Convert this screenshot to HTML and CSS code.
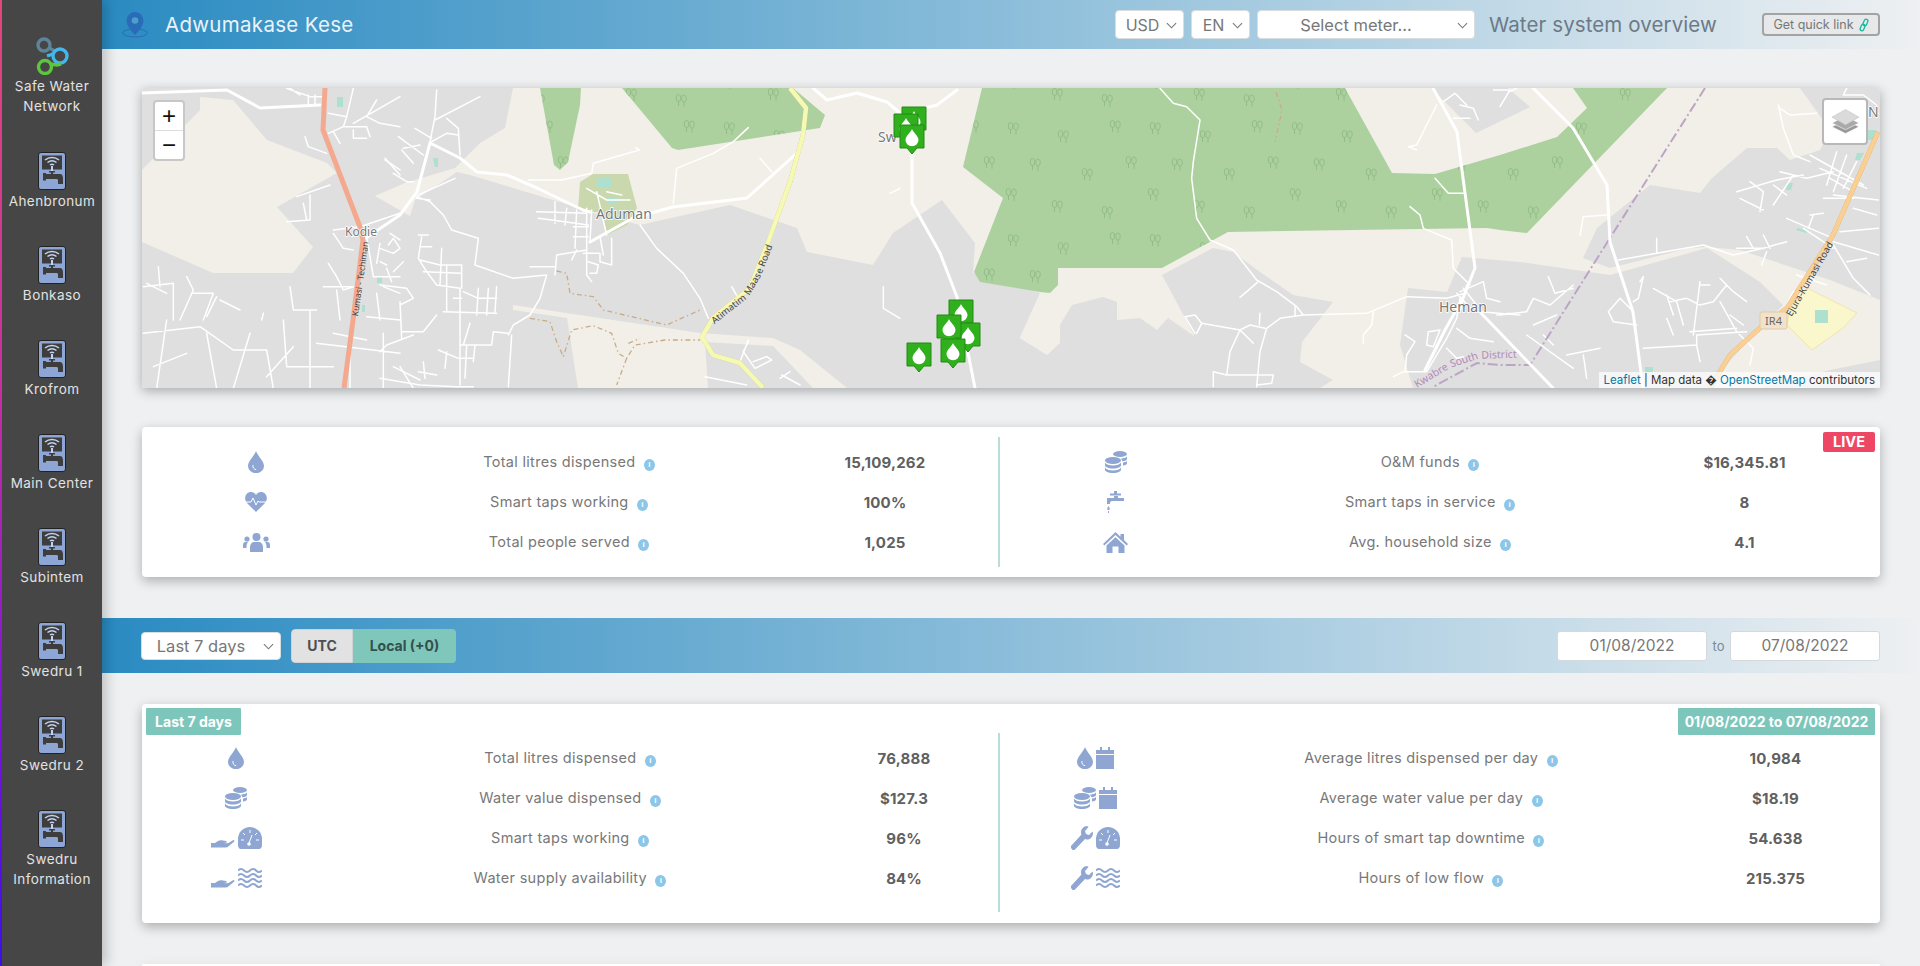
FILE: index.html
```html
<!DOCTYPE html>
<html lang="en">
<head>
<meta charset="utf-8">
<title>Adwumakase Kese - Water system overview</title>
<link rel="stylesheet" href="styles.css">
</head>
<body>
<svg class="defs" width="0" height="0" aria-hidden="true">
  <defs>
    <symbol id="i-drop" viewBox="0 0 16 22"><path d="M8 0C7 4 0 10 0 15a8 7.2 0 0 0 16 0C16 10 9 4 8 0z"/><path class="cut" d="M5 14c-.5 2.500 .8 4.300 3.200 4.700" /></symbol>
    <symbol id="i-heart" viewBox="0 0 22 20"><path d="M11 20L2 11C-2 6 1 0 6 0c2.200 0 4 1 5 3 1-2 2.800-3 5-3 5 0 8 6 4 11z"/><path class="cut" d="M0 10h6l2-4 3 7 2-4 1 1h8"/></symbol>
    <symbol id="i-users" viewBox="0 0 27 19"><circle cx="13.500" cy="4" r="4"/><circle cx="4" cy="6" r="2.600"/><circle cx="23" cy="6" r="2.600"/><path d="M7 19v-5c0-3 2-5 4-5h5c2 0 4 2 4 5v5z"/><path d="M0 15v-3c0-2 1-3 2.500-3H5c-1 1-1.500 3-1.500 5v1zM27 15v-3c0-2-1-3-2.500-3H22c1 1 1.500 3 1.500 5v1z"/></symbol>
    <symbol id="i-coins" viewBox="0 0 22 22"><ellipse cx="15" cy="3" rx="7" ry="3"/><path d="M16 7.500c3 0 6-1 6-2.500v3c0 1-2 2-4.500 2.300zM18 11.500c2 0 4-1 4-2v3c0 1-2 1.800-4 2z"/><ellipse cx="8" cy="9.500" rx="8" ry="3.400"/><path d="M0 11.500c1 2 4 3 8 3s7-1 8-3v3c0 1.500-3.500 3-8 3s-8-1.500-8-3zM0 16.500c1 2 4 3 8 3s7-1 8-3v2.500c0 1.500-3.500 3-8 3s-8-1.500-8-3z"/></symbol>
    <symbol id="i-tap" viewBox="0 0 17 22"><path d="M7 0h3v2.500h-3zM3 2.500h11v2H3zM0 7h7V5h4v2h6v3H5c-1 0-2 1-2 2v1H0v-2c0-2 0-4 0-4z"/><path d="M1.500 15c.6 1.200 1.200 2 1.200 3s-.6 1-1.200 1-1.200 0-1.200-1 .6-1.800 1.200-3zM1 20h1v2H1z"/></symbol>
    <symbol id="i-home" viewBox="0 0 25 21"><path d="M12.500 0l5 4.700V2h3.500v6l4 4-1.300 1.400L12.500 3 1.300 13.400 0 12z"/><path d="M3.500 13.500l9-8.200 9 8.200V21h-6v-6.500h-6V21h-6z"/></symbol>
    <symbol id="i-hand" viewBox="0 0 24 11"><path d="M0 5h4l3-2c2-1 3-1 5-.5l3 .5c1 .3 1 1.500 0 1.800l-3 .2 5 .2 5-3c1-.5 2 .5 1 1.500l-6 5c-1 .6-1.500.8-3 .8H0z"/></symbol>
    <symbol id="i-gauge" viewBox="0 0 24 22"><path d="M12 0a12 12 0 0 1 12 12v6c0 2-1 4-3 4H3c-2 0-3-2-3-4v-6A12 12 0 0 1 12 0z"/><path class="cut" d="M12 3v3M5 6l2 2M19 6l-2 2M3 13h3M21 13h-3M11 16l3-8"/><circle class="cutf" cx="11" cy="17" r="1.800"/></symbol>
    <symbol id="i-waves" viewBox="0 0 24 20"><path class="wave" d="M0 2.500q3-3 6 0t6 0 6 0 6 0M0 7.500q3-3 6 0t6 0 6 0 6 0M0 12.500q3-3 6 0t6 0 6 0 6 0M0 17.500q3-3 6 0t6 0 6 0 6 0"/></symbol>
    <symbol id="i-wrench" viewBox="0 0 22 24"><path d="M16 0c-3 0-6 3-6 6 0 1 0 2 .5 2.500L0 20c-.6 1 .2 2.400 1.200 3.400.8.800 2 .8 2.800 0L14 13c1 .5 2 .5 3 .5 3-.5 5-3.500 5-6.500l-.5-1.500L18 9l-3-1-1-3 3.500-4z"/></symbol>
    <symbol id="i-cal" viewBox="0 0 18 22"><path d="M4 0h2v3h6V0h2v3h4v4H0V3h4zM0 8h18v14H0z"/></symbol>
    <symbol id="i-unit" viewBox="0 0 28 38">
      <rect class="u-body" x=".5" y=".5" width="27" height="37" rx="2.500"/>
      <rect class="u-screen" x="4" y="3.500" width="20" height="14"/>
      <path class="u-wifi" d="M7 8c4-3.500 10-3.500 14 0M9.500 10.500c2.800-2.300 6.200-2.300 9 0M12 13c1.200-1 2.800-1 4 0"/>
      <rect class="u-dot" x="13" y="14" width="2" height="5"/>
      <path class="u-tap" d="M11 19h6v1.500h-2V22H22c2 0 3 1.500 3 5v5h-5v-3.500c0-.8-.5-1.500-1.500-1.500H8v1.500H5V21h3v1h5v-1.500h-2z"/>
    </symbol>
    <symbol id="i-pin" viewBox="0 0 26 26"><ellipse class="p-ring" cx="13" cy="21" rx="12.300" ry="4"/><path class="p-fill" d="M13 0a8.500 8.500 0 0 0-8.500 8.500C4.500 14 10 20 13 23c3-3 8.500-9 8.500-14.500A8.500 8.500 0 0 0 13 0z"/><circle class="p-hole" cx="13" cy="8.500" r="3.300"/></symbol>
    <g id="tree"><ellipse cx="2.500" cy="4" rx="2.300" ry="3.600"/><ellipse cx="8" cy="4.500" rx="2.300" ry="3.600"/><path d="M2.500 7v5M8 8v5"/></g>
    <pattern id="woods" width="142" height="112" patternUnits="userSpaceOnUse" patternTransform="translate(8 4)">
      <g class="tree-g">
        <use href="#tree" x="6" y="6"/><use href="#tree" x="56" y="14"/><use href="#tree" x="108" y="4"/>
        <use href="#tree" x="28" y="42"/><use href="#tree" x="80" y="52"/><use href="#tree" x="124" y="40"/>
        <use href="#tree" x="4" y="72"/><use href="#tree" x="50" y="84"/><use href="#tree" x="100" y="90"/>
      </g>
    </pattern>
    <g id="forests">
      <polygon points="540,88 581,88 580,105 568,162 560,170 554,165"/>
      <polygon points="622,88 793,88 825,115 820,128 678,150 672,148"/>
      <polygon points="982,88 1345,88 1392,173 1435,174 1500,155 1557,137 1587,108 1573,88 1667,88 1527,233 1500,230 1487,228 1228,232 1162,268 1058,268 1058,285 1050,293 1040,292 980,282 974,272 1003,198 963,167"/>
    </g>
    <g id="marker"><path class="m-body" d="M-12 -30H12V-7H5L0 -1L-5 -7H-12z"/><path class="m-drop" d="M0 -26C-1 -23 -6.500 -19 -6.500 -15A6.500 6.200 0 0 0 6.500 -15C6.500 -19 1 -23 0 -26z"/></g>
    <path id="p-yellow" d="M712 321L745 295L757 275L790 190"/>
    <path id="p-red" d="M354 316L366 232"/>
    <path id="p-orange" d="M1788 315L1838 228L1860 190"/>
    <path id="p-dist" d="M1417 388L1450 368L1478 359L1560 356"/>
  </defs>
</svg>

<div class="app">
  <nav class="side">
    <a class="side-item brand">
      <svg class="logo" viewBox="0 0 35 38"><circle class="l1" cx="9" cy="8" r="6"/><path class="l1" d="M14 11l6 3"/><circle class="l2" cx="25" cy="19" r="7"/><path class="l2" d="M18 17l-6 2"/><circle class="l3" cx="10" cy="30" r="6.500"/><path class="l3" d="M15 27l7 1 4-1"/></svg>
      <span>Safe Water<br>Network</span>
    </a>
    <a class="side-item"><svg class="unit"><use href="#i-unit"/></svg><span>Ahenbronum</span></a>
    <a class="side-item"><svg class="unit"><use href="#i-unit"/></svg><span>Bonkaso</span></a>
    <a class="side-item"><svg class="unit"><use href="#i-unit"/></svg><span>Krofrom</span></a>
    <a class="side-item"><svg class="unit"><use href="#i-unit"/></svg><span>Main Center</span></a>
    <a class="side-item"><svg class="unit"><use href="#i-unit"/></svg><span>Subintem</span></a>
    <a class="side-item"><svg class="unit"><use href="#i-unit"/></svg><span>Swedru 1</span></a>
    <a class="side-item"><svg class="unit"><use href="#i-unit"/></svg><span>Swedru 2</span></a>
    <a class="side-item"><svg class="unit"><use href="#i-unit"/></svg><span>Swedru<br>Information</span></a>
  </nav>

  <main class="main">
    <header class="topbar">
      <svg class="pin"><use href="#i-pin"/></svg>
      <h1 class="site">Adwumakase Kese</h1>
      <div class="top-right">
        <div class="sel w-usd"><span>USD</span><svg class="chev" viewBox="0 0 12 7"><path d="M1 1l5 5 5-5"/></svg></div>
        <div class="sel w-en"><span>EN</span><svg class="chev" viewBox="0 0 12 7"><path d="M1 1l5 5 5-5"/></svg></div>
        <div class="sel w-meter"><span>Select meter...</span><svg class="chev" viewBox="0 0 12 7"><path d="M1 1l5 5 5-5"/></svg></div>
        <div class="page-title">Water system overview</div>
        <button class="quick">Get quick link <svg class="link" viewBox="0 0 12 16"><rect x="5.500" y="1" width="4.500" height="8" rx="2.200" transform="rotate(22 7.700 5)"/><rect x="2" y="7" width="4.500" height="8" rx="2.200" transform="rotate(22 4.200 11)"/></svg></button>
      </div>
    </header>

    <section class="map">
      <svg class="map-svg" viewBox="142 88 1738 300" preserveAspectRatio="none">
        <rect class="m-land" x="142" y="88" width="1738" height="300"/>
        <g class="m-grey">
          <polygon points="142,88 513,88 505,128 480,143 455,168 405,183 375,196 410,216 415,200 457,172 470,175 563,203 590,212 640,225 653,222 730,205 797,228 807,252 873,265 893,233 942,200 975,243 973,273 1040,293 997,388 142,388"/>
          <polygon points="1162,275 1213,248 1233,252 1260,272 1293,295 1333,302 1302,342 1300,362 1333,380 1320,388 1218,388 1193,333"/>
          <polygon points="1000,332 1007,348 1018,337 1047,355 1060,343 1060,325 1072,305 1103,297 1117,302 1117,320 1140,318 1157,330 1168,318 1197,338 1215,368 1218,388 997,388"/>
          <polygon points="1400,345 1408,288 1447,292 1462,257 1520,262 1610,275 1707,248 1760,282 1783,305 1760,328 1717,375 1713,388 1413,388"/>
          <polygon points="1583,258 1597,228 1650,185 1700,193 1712,178 1747,148 1777,148 1790,160 1820,150 1830,130 1800,88 1880,88 1880,300 1830,280 1740,250 1707,247 1690,248 1610,268"/>
          <polygon points="1431,88 1476,133 1530,107 1508,88"/>
          <polygon points="1760,388 1830,370 1880,360 1880,388"/>
        </g>
        <g class="m-beige">
          <polygon points="142,170 200,110 200,97 233,100 267,140 327,163 337,173 277,207 313,247 293,273 213,273 142,242"/>
          <polygon points="513,305 700,333 773,338 800,350 847,388 813,388 773,346 705,342 708,388 578,388 567,318 513,310"/>
        </g>
        <use class="m-green" href="#forests"/>
        <use href="#forests" fill="url(#woods)"/>
        <g class="m-campus"><polygon points="580,182 593,174 628,174 637,208 627,225 607,235 603,213 578,210"/></g>
        <polygon class="m-hosp" points="1807,288 1857,313 1843,328 1812,350 1787,325 1790,308"/>
        <g class="m-teal">
          <polygon points="597,178 612,178 612,188 597,188"/><polygon points="608,197 618,197 618,203 608,203"/>
          <polygon points="1815,310 1828,310 1828,323 1815,323"/><polygon points="1868,130 1876,130 1876,140 1868,140"/>
          <polygon points="1857,153 1864,153 1860,160 1855,160"/><polygon points="1787,183 1793,183 1791,190 1786,190"/>
          <polygon points="1798,228 1808,231 1806,233 1796,230"/><polygon points="1645,367 1653,367 1653,372 1645,372"/>
          <polygon points="337,97 343,97 343,107 337,107"/><polygon points="377,277 382,277 382,283 377,283"/>
          <polygon points="433,158 438,158 438,167 435,167"/><polygon points="362,305 365,305 365,312 362,312"/>
        </g>

        <g class="st" transform="translate(0 0) scale(.33333)">
          <path d="M860 265L930 290L965 290M925 285L925 315M945 285L945 315M870 265L900 285M985 340L1040 350L1060 265M1040 350L1030 380L985 400M1060 370L1200 290M1030 380L1100 380L1110 410M1060 390L1060 415L1100 415M1000 395L1020 430M1130 300L1100 350L1140 370L1200 380M915 410L925 440L980 460M1155 480L1200 510M890 590L990 555M930 585L930 660L860 665M910 610L920 660M1000 690L1080 680L1200 640M1000 700L1030 745L1060 750M1100 710L1120 830L1200 830M1140 730L1130 790M1170 700L1200 720M985 790L1010 830L1030 870L1060 860M970 860L1060 860M1010 870L1020 960M430 860L520 850L520 960M475 800L480 860M440 850L500 880M560 830L580 870L540 960M580 880L640 880L610 960M660 900L720 930M650 890L620 950M870 860L880 930L950 930M790 940L785 960M1150 860L1200 880M1130 880L1140 960M430 1000L600 980L700 1050L800 1050L820 1165M500 960L470 1165M620 1000L650 1165M750 1000L700 1165M850 960L860 1100L1000 1100M930 930L930 1165M1000 1000L1100 1020M1050 1050L1050 1165M950 1030L1200 1060M1100 950L1200 960M1150 1000L1150 1165M1200 1100L1240 1165M560 1060L460 1100M880 1040L800 1130"/>
        </g>
        <g class="st" transform="translate(380 85) scale(.33333)">
          <path d="M150 170L165 95L170 15M165 105L300 35M200 100L235 130L240 210M155 170L200 145L235 150M105 130L155 160M55 155L130 210M65 195L100 235M15 220L60 270M40 265L80 290L100 290M120 180L70 190M110 340L150 345M110 335L150 350L190 390L215 435L295 460L285 540L400 580L500 570L480 640L450 690L400 720L385 750M115 330L225 280M125 455L115 520L140 560L170 600L240 610L240 900M115 450L145 450M120 485L155 485M120 525L180 540L245 540L245 610M185 490L180 600M200 540L200 680M130 560L245 565M250 620L295 640L350 640M295 610L290 690M325 610L320 690M350 605L345 680M190 680L350 685M220 640L245 640M170 690L130 740L65 740M60 650L65 760M60 660L100 640L80 610L0 600M0 490L40 505L60 490L40 460L25 480M40 560L70 530M20 550L35 590M0 530L20 540M240 780L335 780L340 740L385 745M260 780L255 880M285 780L280 830M175 795L235 820L280 820M200 800L195 850M270 715L250 780M130 830L135 880M115 860L170 870M0 880L120 900L230 905L280 905M40 845L120 885M395 750L385 905M100 750L20 780L0 800"/>
          <path d="M470 380L620 385M475 400L625 420M525 350L525 415M560 370L555 420M590 375L585 490M620 370L620 500M635 375L630 470M580 425L625 425M580 455L625 455M620 495L530 510L525 570M450 545L525 545M590 495L575 525M620 500L620 570L635 590M610 505L660 505L660 530L695 540L695 460M660 455L670 510M625 530L655 540L650 565L630 565M620 310L680 345L750 345M650 320L680 450M680 320L725 330"/>
          <path d="M445 285L545 285L635 265L640 235L760 200L778 195L768 188M880 355L890 250L1000 205L1060 170L1105 128M780 420L830 490L910 565L960 640L985 700M1140 220L1175 260M1530 325L1560 310M1510 605L1510 670L1560 700M1105 765L1080 830M1105 770L1090 800L1125 850L1175 825L1160 815L1120 830M975 875L1100 900M1205 870L1260 900M1200 880L1230 860M1055 605L1075 640"/>
        </g>
        <g class="st" transform="translate(1000 85) scale(.33333)">
          <path d="M480 10L520 55L560 65L600 105L580 230L575 280L590 400L630 465L700 495L770 585L830 620L890 665L910 690L1100 685L1220 635L1340 640L1395 625M775 590L720 637M885 665L885 690M910 690L840 700L800 730L780 800L770 905M780 685L778 720M555 695L585 690L605 715L720 735L750 720L795 730M555 695L585 745M605 715L590 745M720 735L690 800L680 870L640 860L640 905M720 735L760 775M680 870L820 870L815 895L770 900M1120 680L1115 720L1090 750L1090 775M1305 280L1345 325L1390 325M1230 365L1260 390L1270 430L1355 465L1360 550L1410 600M1310 60L1280 120L1250 180L1225 185L1250 195M1330 50L1365 25L1400 60M1380 60L1420 70L1435 105M1360 100L1410 100M1480 15L1530 15L1500 65M1530 20L1550 10M1370 625L1420 680M1380 620L1450 590M1450 590L1460 640L1500 650M1440 680L1560 690M1490 690L1530 685M1380 640L1370 700L1340 760L1280 860L1210 860L1180 875M1215 750L1245 770L1220 810L1215 860M1285 740L1320 735L1300 785L1280 780L1285 740M1370 730L1410 760L1480 770M1340 790L1370 820L1390 815M1390 610L1430 660M1400 600L1380 680"/>
        </g>
        <g class="st" transform="translate(1500 85) scale(.33333)">
          <path d="M835 60L850 130L880 210L930 230M840 70L870 90L950 85M1040 10L1030 30L1090 30L1130 60M1100 70L1135 85M930 210L1090 300M960 250L1100 310M990 280L1060 320M1010 200L980 300M1040 210L1000 320M1070 230L1030 310M840 260L920 280L1000 260M710 320L830 285L910 270M750 290L790 320L780 380M720 340L790 375M820 300L860 330M880 270L820 360M970 340L1060 340M1000 330L1135 345M860 400L1000 460M910 430L1000 490M1000 470L1135 510M1020 440L1135 430M1060 370L1130 390M930 390L970 385M940 390L925 430M710 490L790 490L860 470M740 455L760 490M790 450L810 490M800 500L785 540M610 480L700 510L790 490M240 450L250 395L320 390M355 525L470 505L610 480M470 460L470 505M1000 480L1060 580L1110 630M890 570L980 600M145 575L165 625L220 610M0 690L80 680L100 640L150 660L220 600M100 720L170 690M80 750L220 850M130 750L160 780M200 810L300 790M250 810L260 880M325 680L360 640L400 680M325 680L340 710L410 720M420 590L430 575L415 640L400 650M460 610L530 650L550 720M500 630L520 690M600 590L580 750M600 600L630 600M660 580L700 620L740 650M680 600L640 650L600 660L560 640L510 650M660 650L710 740L760 790L750 840M430 790L590 780L600 830M590 780L590 750L740 740M500 700L520 750M570 740L710 730M690 690L730 720M1040 530L1100 520M880 620L860 660"/>
        </g>
        <g class="dash" transform="translate(380 85) scale(.33333)">
          <path d="M530 558L560 565L570 625L640 635L670 675L860 720L960 675M450 700L510 710L530 770L550 815L575 735L640 722L695 745L715 805L740 820L765 780L855 765L960 765M740 820L710 900M745 775L780 760"/>
        </g>
        <path class="dash dash-full" d="M1276 92L1282 110L1275 142"/>

        <path class="r-border" d="M1705 88L1610 238L1530 365L1500 365L1477 363L1433 387"/>
        <g class="r-white">
          <path d="M142 93L227 90L260 108L320 105"/>
          <path d="M363 240L400 215L417 192L430 143L460 158L477 172L507 175L537 188L583 210L590 212M590 242L633 218L673 207L747 198L797 153"/>
          <path d="M813 88L827 100L857 93L887 102L900 113L912 153L912 203L940 253L957 297L975 388M957 90L937 105L917 110"/>
          <path d="M1433 88L1457 132L1463 178L1475 268L1463 298L1445 330L1425 370M1480 312L1553 388"/>
          <path d="M1533 88L1573 128L1607 185L1610 242L1633 312L1643 388"/>
        </g>
        <g class="r-trunk"><path d="M325 88L323 130L360 227L363 240L353 320L344 388"/></g>
        <g class="r-yellow"><path d="M790 88L806 108L803 135L790 182L767 245L750 288L713 318L702 337L713 355L740 363L763 388"/></g>
        <g class="r-orange"><path d="M1878 132L1833 235L1787 308L1760 328L1730 355L1710 388"/></g>
        <g class="m-shield"><rect x="1760" y="312" width="27" height="17" rx="2"/><text x="1773.500" y="325">IR4</text></g>

        <g class="m-label">
          <text x="345" y="236" class="t-sm">Kodie</text>
          <text x="596" y="219">Aduman</text>
          <text x="1439" y="312">Heman</text>
          <text x="878" y="142">Sw</text>
          <text x="1868" y="117">N</text>
        </g>
        <g class="m-road">
          <text class="t-kum"><textPath href="#p-red">Kumasi - Techiman</textPath></text>
          <text><textPath href="#p-yellow">Atimatim Maase Road</textPath></text>
          <text><textPath href="#p-orange">Ejura-Kumasi Road</textPath></text>
          <text class="t-dist"><textPath href="#p-dist">Kwabre South District</textPath></text>
        </g>

        <use href="#marker" x="914" y="137"/>
        <use href="#marker" x="906" y="144"/>
        <use href="#marker" x="912" y="155"/>
        <use href="#marker" x="961" y="330"/>
        <use href="#marker" x="968" y="353"/>
        <use href="#marker" x="949" y="345"/>
        <use href="#marker" x="953" y="369"/>
        <use href="#marker" x="919" y="373"/>
      </svg>

      <div class="zoomctl"><span>+</span><span>&minus;</span></div>
      <div class="layers">
        <svg viewBox="0 0 28 26"><path class="ly3" d="M14 11L28 18 14 25 0 18z"/><path class="ly2" d="M14 7L28 14 14 21 0 14z"/><path class="ly1" d="M14 0L28 8 14 16 0 8z"/></svg>
      </div>
      <div class="attrib"><a>Leaflet</a> | Map data &#xFFFD; <a>OpenStreetMap</a> contributors</div>
    </section>

    <section class="card totals">
      <span class="live">LIVE</span>
      <div class="half left">
        <div class="row"><span class="ic"><svg class="s-drop"><use href="#i-drop"/></svg></span><span class="lbl">Total litres dispensed <i class="info">i</i></span><b class="val">15,109,262</b></div>
        <div class="row"><span class="ic"><svg class="s-heart"><use href="#i-heart"/></svg></span><span class="lbl">Smart taps working <i class="info">i</i></span><b class="val">100%</b></div>
        <div class="row"><span class="ic"><svg class="s-users"><use href="#i-users"/></svg></span><span class="lbl">Total people served <i class="info">i</i></span><b class="val">1,025</b></div>
      </div>
      <div class="half right">
        <div class="row"><span class="ic"><svg class="s-coins"><use href="#i-coins"/></svg></span><span class="lbl">O&amp;M funds <i class="info">i</i></span><b class="val">$16,345.81</b></div>
        <div class="row"><span class="ic"><svg class="s-tap"><use href="#i-tap"/></svg></span><span class="lbl">Smart taps in service <i class="info">i</i></span><b class="val">8</b></div>
        <div class="row"><span class="ic"><svg class="s-home"><use href="#i-home"/></svg></span><span class="lbl">Avg. household size <i class="info">i</i></span><b class="val">4.1</b></div>
      </div>
    </section>

    <div class="datebar">
      <div class="sel w-range"><span>Last 7 days</span><svg class="chev" viewBox="0 0 12 7"><path d="M1 1l5 5 5-5"/></svg></div>
      <div class="toggle"><span class="tg-utc">UTC</span><span class="tg-local">Local (+0)</span></div>
      <div class="dates">
        <span class="date">01/08/2022</span><span class="to">to</span><span class="date">07/08/2022</span>
      </div>
    </div>

    <section class="card period">
      <span class="tag tag-l">Last 7 days</span>
      <span class="tag tag-r">01/08/2022 to 07/08/2022</span>
      <div class="half left">
        <div class="row"><span class="ic"><svg class="s-drop"><use href="#i-drop"/></svg></span><span class="lbl">Total litres dispensed <i class="info">i</i></span><b class="val">76,888</b></div>
        <div class="row"><span class="ic"><svg class="s-coins"><use href="#i-coins"/></svg></span><span class="lbl">Water value dispensed <i class="info">i</i></span><b class="val">$127.3</b></div>
        <div class="row"><span class="ic"><svg class="s-hand"><use href="#i-hand"/></svg><svg class="s-gauge"><use href="#i-gauge"/></svg></span><span class="lbl">Smart taps working <i class="info">i</i></span><b class="val">96%</b></div>
        <div class="row"><span class="ic"><svg class="s-hand"><use href="#i-hand"/></svg><svg class="s-gauge"><use href="#i-waves"/></svg></span><span class="lbl">Water supply availability <i class="info">i</i></span><b class="val">84%</b></div>
      </div>
      <div class="half right">
        <div class="row"><span class="ic"><svg class="s-drop"><use href="#i-drop"/></svg><svg class="s-cal"><use href="#i-cal"/></svg></span><span class="lbl">Average litres dispensed per day <i class="info">i</i></span><b class="val">10,984</b></div>
        <div class="row"><span class="ic"><svg class="s-coins"><use href="#i-coins"/></svg><svg class="s-cal"><use href="#i-cal"/></svg></span><span class="lbl">Average water value per day <i class="info">i</i></span><b class="val">$18.19</b></div>
        <div class="row"><span class="ic"><svg class="s-wrench"><use href="#i-wrench"/></svg><svg class="s-gauge"><use href="#i-gauge"/></svg></span><span class="lbl">Hours of smart tap downtime <i class="info">i</i></span><b class="val">54.638</b></div>
        <div class="row"><span class="ic"><svg class="s-wrench"><use href="#i-wrench"/></svg><svg class="s-gauge"><use href="#i-waves"/></svg></span><span class="lbl">Hours of low flow <i class="info">i</i></span><b class="val">215.375</b></div>
      </div>
    </section>

    <section class="card next"></section>
  </main>
</div>
</body>
</html>
```
FILE: styles.css
```css
* { box-sizing: border-box; }
html, body { margin: 0; height: 100%; overflow: hidden; }
body { font-family: Inter, "Noto Sans", "Liberation Sans", sans-serif; background: #eef0f2; color: #777; }
.defs { position: absolute; }

.app { display: flex; height: 966px; }

/* Sidebar */
.side {
  position: relative; z-index: 2;
  width: 102px; flex: none; height: 100%;
  padding-top: 37px; padding-left: 2px;
  background: #464646;
  box-shadow: 4px 0 12px rgba(0,0,0,.22);
  display: flex; flex-direction: column;
}
.side::before {
  content: ""; position: absolute; left: 0; top: 0; bottom: 0; width: 2px;
  background: linear-gradient(180deg, #e2477c 0%, #c92fa0 40%, #7a14d8 75%, #3a10e8 100%);
}
.side-item {
  height: 94px; display: flex; flex-direction: column; align-items: center;
  color: #e2e2e2; font-size: 13.500px; line-height: 20px; text-align: center; letter-spacing: .45px; white-space: nowrap;
}
.side-item.brand { height: 115px; }
.logo { width: 35px; height: 38px; margin-bottom: 1px; fill: none; stroke-width: 3.400; }
.logo .l1 { stroke: #5d8499; }
.logo .l2 { stroke: #43b7ea; }
.logo .l3 { stroke: #5cc63c; }
.unit { width: 28px; height: 38px; margin-bottom: 1px; }
.u-body { fill: #8ea6d6; stroke: #222; }
.u-screen { fill: #3d3d3d; }
.u-wifi { fill: none; stroke: #c4d2ee; stroke-width: 1.500; }
.u-dot { fill: #c4d2ee; }
.u-tap { fill: #3d3d3d; }

/* Main */
.main { flex: 1; min-width: 0; height: 100%; overflow: hidden; display: flex; flex-direction: column; }

.topbar, .datebar {
  flex: none;
  background: linear-gradient(90deg, #2a8bc2 0%, #eef0f2 100%);
  display: flex; align-items: center;
}
.topbar { height: 49px; padding-left: 20px; padding-right: 40px; }
.pin { width: 26px; height: 26px; margin-right: 17px; }
.p-ring { fill: none; stroke: #2a6cb8; stroke-width: 1; }
.p-fill { fill: #2a6cb8; }
.p-hole { fill: #4d9fcb; }
.site { margin: 0; font-size: 20.500px; font-weight: 400; color: #eaf3f8; letter-spacing: .3px; }
.top-right { margin-left: auto; display: flex; align-items: center; }

.sel {
  position: relative; height: 29px; background: #fff; border: 1px solid #d8dde0; border-radius: 4px;
  display: flex; align-items: center; justify-content: center; color: #777; font-size: 16px;
}
.sel.w-usd { width: 69px; padding-right: 14px; margin-right: 7px; }
.sel.w-en { width: 59px; padding-right: 14px; margin-right: 7px; }
.sel.w-meter { width: 218px; padding-right: 20px; font-size: 16.500px; }
.sel.w-range { width: 140px; height: 28px; padding-right: 20px; font-size: 16.500px; }
.chev { position: absolute; right: 6px; top: 50%; width: 11px; height: 7px; margin-top: -3px; fill: none; stroke: #777; stroke-width: 1.200; }
.page-title { margin-left: 14px; width: 273px; font-size: 20.500px; color: #6c7a86; letter-spacing: .1px; white-space: nowrap; }
.quick {
  width: 118px; height: 23px; padding: 0; border: 2px solid #a3a3a3; border-radius: 4px; background: #e6e8e9;
  color: #777; font: 400 12.500px Inter, sans-serif; display: flex; align-items: center; justify-content: center; gap: 5px; white-space: nowrap;
}
.link { width: 10px; height: 14px; fill: none; stroke: #16b89c; stroke-width: 1.500; flex: none; }

/* Map */
.map {
  position: relative; flex: none; height: 300px; margin: 39px 40px 0 40px;
  box-shadow: 0 3px 12px rgba(0,0,0,.3); overflow: hidden; border-radius: 2px;
  background: #f2efe9;
}
.map-svg { display: block; width: 100%; height: 100%; }
.m-land { fill: #f2efe9; }
.m-grey polygon { fill: #dfdfdf; }
.m-beige polygon { fill: #f2efe9; }
.m-green { fill: #add19e; }
.m-campus polygon { fill: #c9d9ad; }
.m-hosp { fill: #fbf7cc; stroke: #f0e3b0; }
.m-teal polygon { fill: #aee0cf; }
.tree-g { fill: none; stroke: #8fbb83; stroke-width: .9; }
.st { fill: none; stroke: #fff; }
.st path { stroke-width: 1.500; stroke-linejoin: round; stroke-linecap: round; vector-effect: non-scaling-stroke; }
.dash path, path.dash-full { fill: none; stroke: #c9ab88; stroke-width: 1.300; stroke-dasharray: 5 3 1.500 3; vector-effect: non-scaling-stroke; }
.r-white path { fill: none; stroke: #fff; stroke-width: 3; stroke-linejoin: round; stroke-linecap: round; }
.r-trunk path { fill: none; stroke: #f4a98f; stroke-width: 5; stroke-linejoin: round; }
.r-yellow path { fill: none; stroke: #f6f9b4; stroke-width: 4.500; stroke-linejoin: round; paint-order: stroke; filter: drop-shadow(0 0 .6px #b9b96a); }
.r-orange path { fill: none; stroke: #f9cf94; stroke-width: 4.500; stroke-linejoin: round; filter: drop-shadow(0 0 .5px #c89a52); }
.r-border { fill: none; stroke: #bca5c4; stroke-width: 2; stroke-dasharray: 10 3 2 3; }
.m-shield rect { fill: #f1e2c9; stroke: #dccba8; }
.m-shield text { font: 11px "Noto Sans", sans-serif; fill: #666; text-anchor: middle; }
.m-label text { font: 14px "Noto Sans", sans-serif; fill: #777; paint-order: stroke; stroke: #fff; stroke-width: 1.500; }
.m-label .t-sm { font-size: 12px; }
.m-road text { font: 9.500px "Noto Sans", sans-serif; fill: #444; dominant-baseline: central; }
.m-road .t-kum { font-size: 8.500px; }
.m-road .t-dist { font-size: 10.500px; fill: #b58ab8; dominant-baseline: auto; }
.m-body { fill: #31b01e; stroke: #238a14; stroke-width: 1; }
.m-drop { fill: #fff; }

.zoomctl {
  position: absolute; left: 11px; top: 12px; width: 32px; height: 61px;
  border: 2px solid rgba(0,0,0,.22); border-radius: 4px; background: #fff; display: flex; flex-direction: column;
}
.zoomctl span { flex: 1; display: flex; align-items: center; justify-content: center; font: 400 24px "Liberation Sans", sans-serif; color: #111; }
.zoomctl span:first-child { border-bottom: 1px solid #ddd; }
.layers {
  position: absolute; right: 12px; top: 10px; width: 46px; height: 47px;
  border: 2px solid rgba(0,0,0,.28); border-radius: 4px; background: #fff; display: flex; align-items: center; justify-content: center;
}
.layers svg { width: 27px; height: 26px; }
.ly1 { fill: #dadada; stroke: #bbb; stroke-width: .5; }
.ly2 { fill: #a9a9a9; stroke: #fff; stroke-width: .6; }
.ly3 { fill: #999; stroke: #fff; stroke-width: .6; }
.attrib {
  position: absolute; right: 0; bottom: 0; height: 16px; padding: 0 5px;
  background: rgba(255,255,255,.7); color: #333; font-size: 11.500px; line-height: 16px; white-space: nowrap;
}
.attrib a { color: #0078a8; }

/* Cards */
.card {
  position: relative; flex: none; display: flex; margin: 0 40px; background: #fff; border-radius: 4px;
  box-shadow: 0 4px 12px rgba(0,0,0,.28);
}
.totals { height: 150px; margin-top: 39px; padding: 10px 0; }
.period { height: 219px; margin-top: 31px; padding: 29px 0 11px; }
.next { flex: 1; margin-top: 41px; }
.half { display: flex; flex-direction: column; }
.half.left { width: 858px; border-right: 2px solid #b9ded7; }
.half.right { width: 880px; }
.row { height: 40px; display: grid; align-items: center; font-size: 14.500px; }
.totals .half.left, .totals .half.right { padding-top: 5px; }
.period .half.left, .period .half.right { padding-top: 5px; }
.totals .left .row { grid-template-columns: 228px 398px 230px; }
.totals .right .row { grid-template-columns: 231px 398px 251px; }
.period .left .row { grid-template-columns: 188px 480px 188px; }
.period .right .row { grid-template-columns: 191px 480px 209px; }
.ic { display: flex; align-items: center; justify-content: center; gap: 3px; }
.lbl { text-align: center; color: #787878; white-space: nowrap; letter-spacing: .3px; }
.val { text-align: center; color: #606060; font-weight: 700; font-size: 15px; letter-spacing: .2px; }
.totals .left .val { padding-left: 4px; }
.totals .right .val { padding-right: 20px; }
.info {
  display: inline-block; width: 11px; height: 12px; margin-left: 4px; border-radius: 50%; background: #8cc7ea; color: #fff;
  font: 700 8px/12px "Liberation Sans", sans-serif; text-align: center; vertical-align: 0; letter-spacing: 0;
}
.ic svg { fill: #8ea6d1; flex: none; }
.cut { fill: none; stroke: #fff; stroke-width: 1; }
.cutf { fill: #fff; }
.wave { fill: none; stroke: #8ea6d1; stroke-width: 2; }
.s-drop { width: 16px; height: 22px; }
.s-heart { width: 22px; height: 20px; }
.s-users { width: 27px; height: 19px; }
.s-coins { width: 22px; height: 22px; }
.s-tap { width: 17px; height: 22px; }
.s-home { width: 25px; height: 21px; }
.s-hand { width: 24px; height: 11px; align-self: flex-end; margin-bottom: 0; }
.s-gauge { width: 24px; height: 22px; }
.s-wrench { width: 22px; height: 24px; }
.s-cal { width: 18px; height: 22px; }
.live {
  position: absolute; right: 5px; top: 5px; height: 20px; width: 52px; border-radius: 2px;
  background: #ee4766; color: #fff; font-size: 14.500px; font-weight: 700; line-height: 20px; text-align: center;
}
.tag {
  position: absolute; top: 4px; height: 27px; background: #7cc6bb; color: #fff; font-size: 14px; font-weight: 700;
  line-height: 27px; text-align: center; border-radius: 1px; white-space: nowrap;
}
.tag-l { left: 4px; width: 95px; }
.tag-r { right: 5px; width: 197px; }

/* Date bar */
.datebar { height: 55px; margin-top: 41px; padding-left: 39px; padding-right: 40px; }
.toggle { display: flex; height: 34px; margin-left: 10px; border-radius: 4px; overflow: hidden; font-size: 14px; font-weight: 700; }
.tg-utc { width: 62px; background: #e2e2e2; color: #4f4f4f; border: 1px solid #cfd3d3; border-radius: 4px 0 0 4px; display: flex; align-items: center; justify-content: center; }
.tg-local { width: 103px; background: #7fc6bb; color: #35504c; display: flex; align-items: center; justify-content: center; }
.dates { margin-left: auto; display: flex; align-items: center; }
.date { height: 30px; background: #fff; border: 1px solid #d4d9dc; border-radius: 3px; color: #777; font-size: 15.500px; display: flex; align-items: center; justify-content: center; width: 150px; }
.to { width: 23px; text-align: center; font-size: 13px; color: #7b8a94; }
```
